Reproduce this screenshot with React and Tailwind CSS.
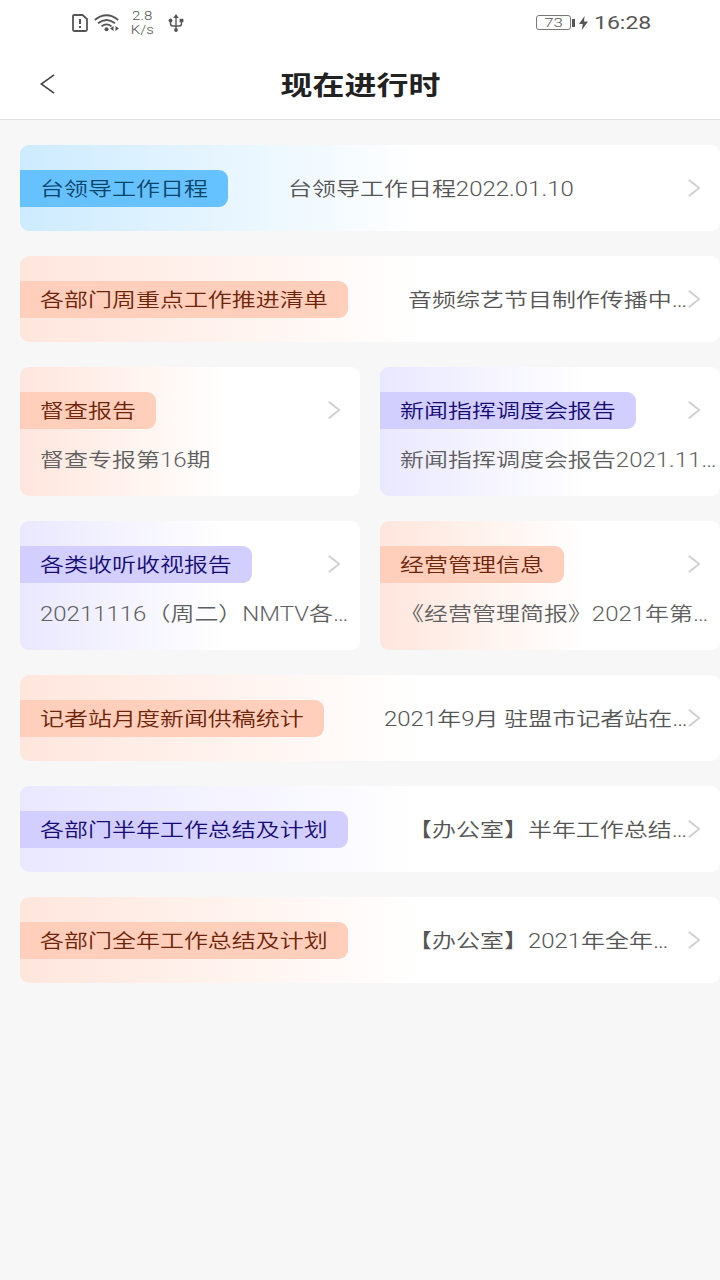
import React from "react";

const tones = {
  blue: { card: "from-[#cdebff]", tag: "bg-[#66c1ff] text-[#0b456b]" },
  peach: { card: "from-[#ffe6dd]", tag: "bg-[#ffcfbc] text-[#6e2408]" },
  purple: { card: "from-[#eae8ff]", tag: "bg-[#d2cfff] text-[#160c73]" },
};

const Chevron = ({ className = "" }) => (
  <svg className={`w-3 h-[18px] shrink-0 ${className}`} viewBox="0 0 12 18" fill="none" stroke="#cecece" strokeWidth="1.8">
    <path d="M0.8 0.8L11.2 9L0.8 17.2" />
  </svg>
);

const Text = ({ children, className = "" }) => (
  <span className={`block pt-px whitespace-pre origin-left scale-x-[1.22] text-[19.66px] leading-[38px] font-[350] ${className}`}>
    {children}
  </span>
);

const Tag = ({ tone, label, width }) => (
  <div className={`${width} h-[37px] shrink-0 pl-5 rounded-r-[9px] ${tones[tone].tag}`}>
    <Text>{label}</Text>
  </div>
);

const WideCard = ({ tone, label, width, detail }) => (
  <div className={`h-[86px] flex items-center pr-5 rounded-[9px] bg-linear-to-r ${tones[tone].card} to-white to-57%`}>
    <Tag tone={tone} label={label} width={width} />
    <div className="flex-1 w-0 h-[37px] ml-[60px] text-[#555]">
      <Text>{detail}</Text>
    </div>
    <Chevron />
  </div>
);

const SmallCard = ({ tone, label, width, detail }) => (
  <div className={`w-[340px] h-[129px] pt-[25px] rounded-[9px] bg-linear-to-r ${tones[tone].card} to-white to-60%`}>
    <div className="h-[37px] flex items-center justify-between pr-5">
      <Tag tone={tone} label={label} width={width} />
      <Chevron className="mb-[2px]" />
    </div>
    <div className="mt-3 pl-5 w-0 text-[#5f5f5f]">
      <Text>{detail}</Text>
    </div>
  </div>
);

const StatusBar = () => (
  <div className="h-[45px] flex items-center justify-between pl-[72px] pr-[68px] text-[#555]">
    <div className="flex items-center">
      <svg className="w-4 h-[18px]" viewBox="0 0 16 18" fill="none" stroke="currentColor" strokeWidth="1.8">
        <path d="M2 1H10.5L15 5V15.5Q15 17 13.5 17H2.5Q1 17 1 15.5V2Q1 1 2 1Z" />
        <path d="M8 5V10M8 12V14" strokeWidth="2" />
      </svg>
      <svg className="ml-[6px] w-[26px] h-[18px]" viewBox="0 0 26 18" fill="none" stroke="currentColor" strokeWidth="1.8">
        <path d="M0.8 6Q12.5 -3.4 24.2 6M4 9.3Q12.5 2.6 21 9.3M7.5 12.4Q12.5 8.3 17.5 12.4" />
        <circle cx="12.5" cy="15.2" r="2" fill="currentColor" stroke="none" />
        <path d="M19.5 12V17L16 14.5ZM21.5 12V17L25 14.5Z" fill="currentColor" stroke="none" />
      </svg>
      <div className="ml-[11px] w-[22px] flex flex-col items-center text-[12px] leading-[14px] font-light">
        <span className="block scale-x-[1.25]">2.8</span>
        <span className="block scale-x-[1.25]">K/s</span>
      </div>
      <svg className="ml-[15px] w-4 h-[18px]" viewBox="0 0 16 18" fill="none" stroke="currentColor" strokeWidth="1.4">
        <path d="M8 2V16M2.5 6V9.5Q2.5 12 5 12H11Q13.5 12 13.5 9.5V6" />
        <path d="M8 0L10.8 4H5.2Z" fill="currentColor" stroke="none" />
        <circle cx="8" cy="16" r="1.9" fill="currentColor" stroke="none" />
        <circle cx="2.5" cy="6.5" r="1.9" fill="currentColor" stroke="none" />
        <path d="M11.6 4.8H15.4V8.2H11.6Z" fill="currentColor" stroke="none" />
      </svg>
    </div>
    <div className="flex items-center">
      <div className="w-[35px] h-[15px] flex items-center justify-center border border-[#777] rounded-[3px] text-[13.5px] leading-[15px] font-light">
        <span className="block scale-x-[1.25]">73</span>
      </div>
      <div className="ml-[1px] w-[3px] h-2 bg-[#555]" />
      <svg className="ml-1 w-[9px] h-[14px]" viewBox="0 0 9 14" fill="currentColor">
        <path d="M5.6 0L0 8H3.8L2.8 14L9 5.6H5Z" />
      </svg>
      <div className="ml-[6px] w-[58px] flex justify-center text-[19px] leading-6">
        <span className="block pt-px scale-x-[1.21]">16:28</span>
      </div>
    </div>
  </div>
);

const App = () => {
  return (
    <div className="w-[720px] h-[1280px] overflow-hidden bg-[#f7f7f7] font-['Roboto','Noto_Sans_CJK_SC',sans-serif]">
      <div className="h-[120px] bg-white border-b border-[#e2e2e2]">
        <StatusBar />
        <div className="h-[78px] grid grid-cols-[1fr_auto_1fr] items-center">
          <svg className="ml-10 w-[15px] h-5" viewBox="0 0 15 20" fill="none" stroke="#444" strokeWidth="1.6">
            <path d="M14 0.8L1.2 10L14 19.2" />
          </svg>
          <h1 className="pt-[5px] scale-x-[1.22] text-[26.2px] font-bold text-[#222]">现在进行时</h1>
        </div>
      </div>

      <div className="pt-[25px] pl-5 flex flex-col gap-[25px]">
        <WideCard tone="blue" label="台领导工作日程" width="w-[208px]" detail="台领导工作日程2022.01.10" />
        <WideCard tone="peach" label="各部门周重点工作推进清单" width="w-[328px]" detail="音频综艺节目制作传播中…" />
        <div className="flex gap-5">
          <SmallCard tone="peach" label="督查报告" width="w-[136px]" detail="督查专报第16期" />
          <SmallCard tone="purple" label="新闻指挥调度会报告" width="w-[256px]" detail="新闻指挥调度会报告2021.11…" />
        </div>
        <div className="flex gap-5">
          <SmallCard tone="purple" label="各类收听收视报告" width="w-[232px]" detail="20211116（周二）NMTV各…" />
          <SmallCard tone="peach" label="经营管理信息" width="w-[184px]" detail="《经营管理简报》2021年第…" />
        </div>
        <WideCard tone="peach" label="记者站月度新闻供稿统计" width="w-[304px]" detail="2021年9月 驻盟市记者站在…" />
        <WideCard tone="purple" label="各部门半年工作总结及计划" width="w-[328px]" detail="【办公室】半年工作总结…" />
        <WideCard tone="peach" label="各部门全年工作总结及计划" width="w-[328px]" detail="【办公室】2021年全年…" />
      </div>
    </div>
  );
};

export default App;
